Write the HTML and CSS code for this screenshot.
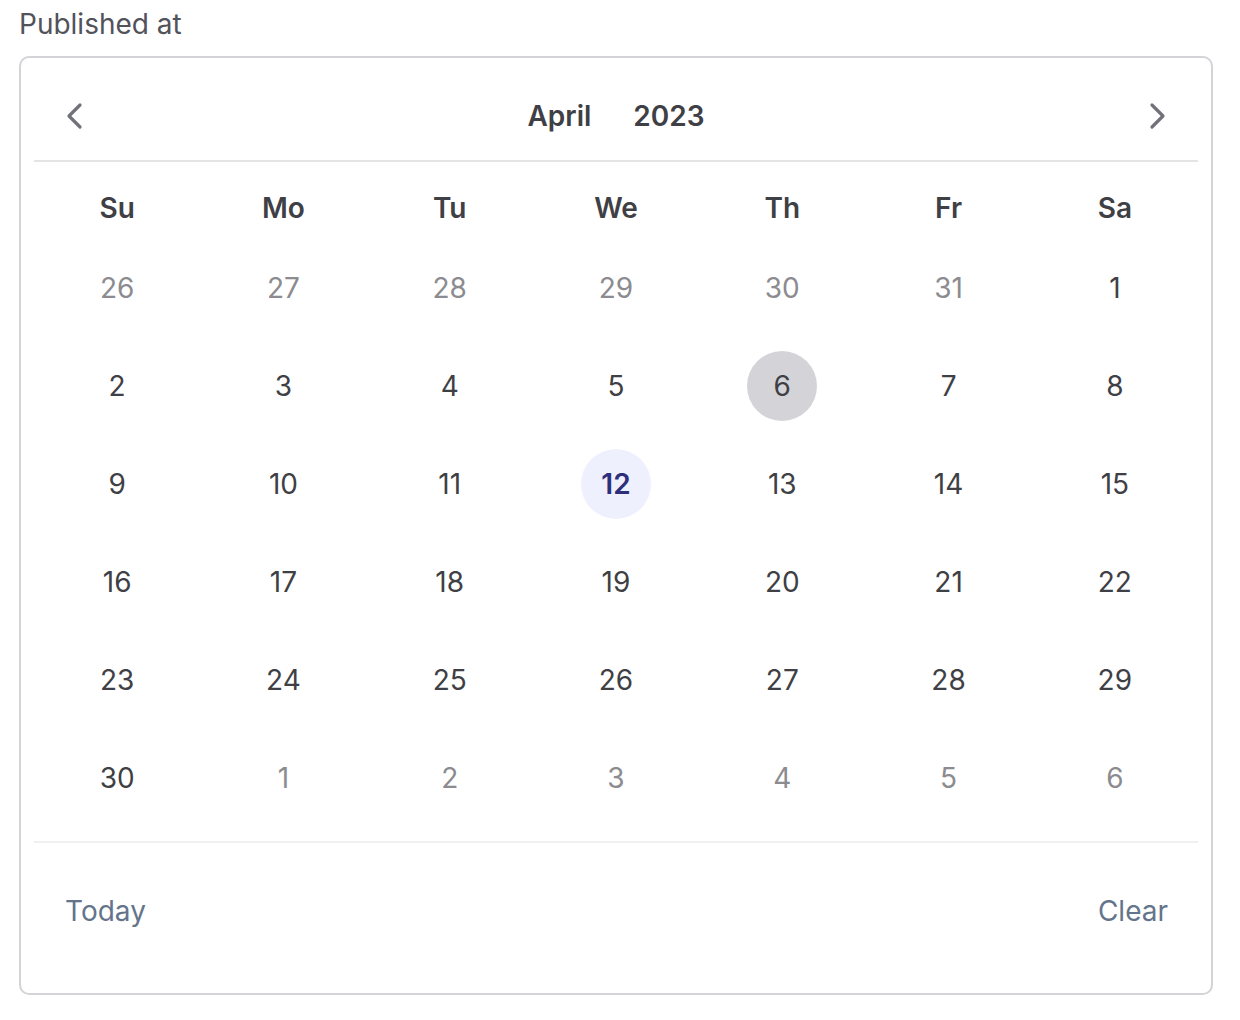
FILE: index.html
```html
<!DOCTYPE html>
<html lang="en">
<head>
<meta charset="utf-8">
<title>Published at</title>
<link rel="stylesheet" href="styles.css">
</head>
<body>
<div class="field">
  <label class="field-label">Published at</label>
  <div class="calendar">
    <div class="cal-header">
      <button class="nav-btn" aria-label="Previous month">
        <svg width="24" height="30" viewBox="0 0 24 30"><path d="M17 4 L6 15 L17 26" fill="none" stroke="#71717a" stroke-width="3.2" stroke-linecap="round" stroke-linejoin="round"/></svg>
      </button>
      <div class="cal-title"><span>April</span><span>2023</span></div>
      <button class="nav-btn" aria-label="Next month">
        <svg width="24" height="30" viewBox="0 0 24 30"><path d="M7 4 L18 15 L7 26" fill="none" stroke="#71717a" stroke-width="3.2" stroke-linecap="round" stroke-linejoin="round"/></svg>
      </button>
    </div>
    <div class="cal-body">
      <div class="weekdays">
        <div>Su</div><div>Mo</div><div>Tu</div><div>We</div><div>Th</div><div>Fr</div><div>Sa</div>
      </div>
      <div class="days">
        <div class="day muted">26</div><div class="day muted">27</div><div class="day muted">28</div><div class="day muted">29</div><div class="day muted">30</div><div class="day muted">31</div><div class="day">1</div>
        <div class="day">2</div><div class="day">3</div><div class="day">4</div><div class="day">5</div><div class="day selected">6</div><div class="day">7</div><div class="day">8</div>
        <div class="day">9</div><div class="day">10</div><div class="day">11</div><div class="day today">12</div><div class="day">13</div><div class="day">14</div><div class="day">15</div>
        <div class="day">16</div><div class="day">17</div><div class="day">18</div><div class="day">19</div><div class="day">20</div><div class="day">21</div><div class="day">22</div>
        <div class="day">23</div><div class="day">24</div><div class="day">25</div><div class="day">26</div><div class="day">27</div><div class="day">28</div><div class="day">29</div>
        <div class="day">30</div><div class="day muted">1</div><div class="day muted">2</div><div class="day muted">3</div><div class="day muted">4</div><div class="day muted">5</div><div class="day muted">6</div>
      </div>
    </div>
    <div class="cal-footer">
      <button class="link-btn">Today</button>
      <button class="link-btn">Clear</button>
    </div>
  </div>
</div>
</body>
</html>
```
FILE: styles.css
```css
* { box-sizing: border-box; }
html, body { margin: 0; padding: 0; background: #ffffff; }
body { font-family: Inter, "Noto Sans", "Liberation Sans", sans-serif; color: #3f3f46; }

.field { padding: 7px 27px 0 19px; }
.field-label { display: block; font-size: 28px; line-height: 34px; color: #52525b; margin-bottom: 15px; }

.calendar {
  border: 2px solid #d4d4d8;
  border-radius: 10px;
  padding: 0 13px;
  background: #fff;
}

.cal-header {
  display: flex;
  align-items: center;
  justify-content: space-between;
  padding: 38px 0 24px;
  border-bottom: 2px solid #e4e4e7;
}
.nav-btn {
  width: 50px; height: 40px;
  margin: 0 16px;
  border: 0; background: transparent; padding: 0;
  display: flex; align-items: center; justify-content: center;
}
.cal-title {
  display: flex; gap: 42px;
  font-size: 28px; font-weight: 600; line-height: 40px; color: #3f3f46;
}

.cal-body { padding: 11px 0 28px; border-bottom: 2px solid #f0f0f2; }
.weekdays {
  display: grid; grid-template-columns: repeat(7, 1fr);
  height: 70px; margin-bottom: 10px;
  font-size: 28px; font-weight: 600; color: #3f3f46;
}
.weekdays div { display: flex; align-items: center; justify-content: center; }

.days { display: grid; grid-template-columns: repeat(7, 1fr); row-gap: 28px; }
.day {
  justify-self: center;
  width: 70px; height: 70px; border-radius: 50%;
  display: flex; align-items: center; justify-content: center;
  font-size: 28px; color: #3f3f46;
}
.day.muted { color: #8b8b90; }
.day.selected { background: #d4d4d8; color: #3f3f46; }
.day.today { background: #eef0fd; color: #2e2f7a; font-weight: 600; }

.cal-footer {
  display: flex; justify-content: space-between; align-items: center;
  padding: 51px 30px 65px 31px;
}
.link-btn {
  border: 0; background: transparent; padding: 0;
  font-family: inherit; font-size: 28px; line-height: 34px; color: #64748b;
}
```
